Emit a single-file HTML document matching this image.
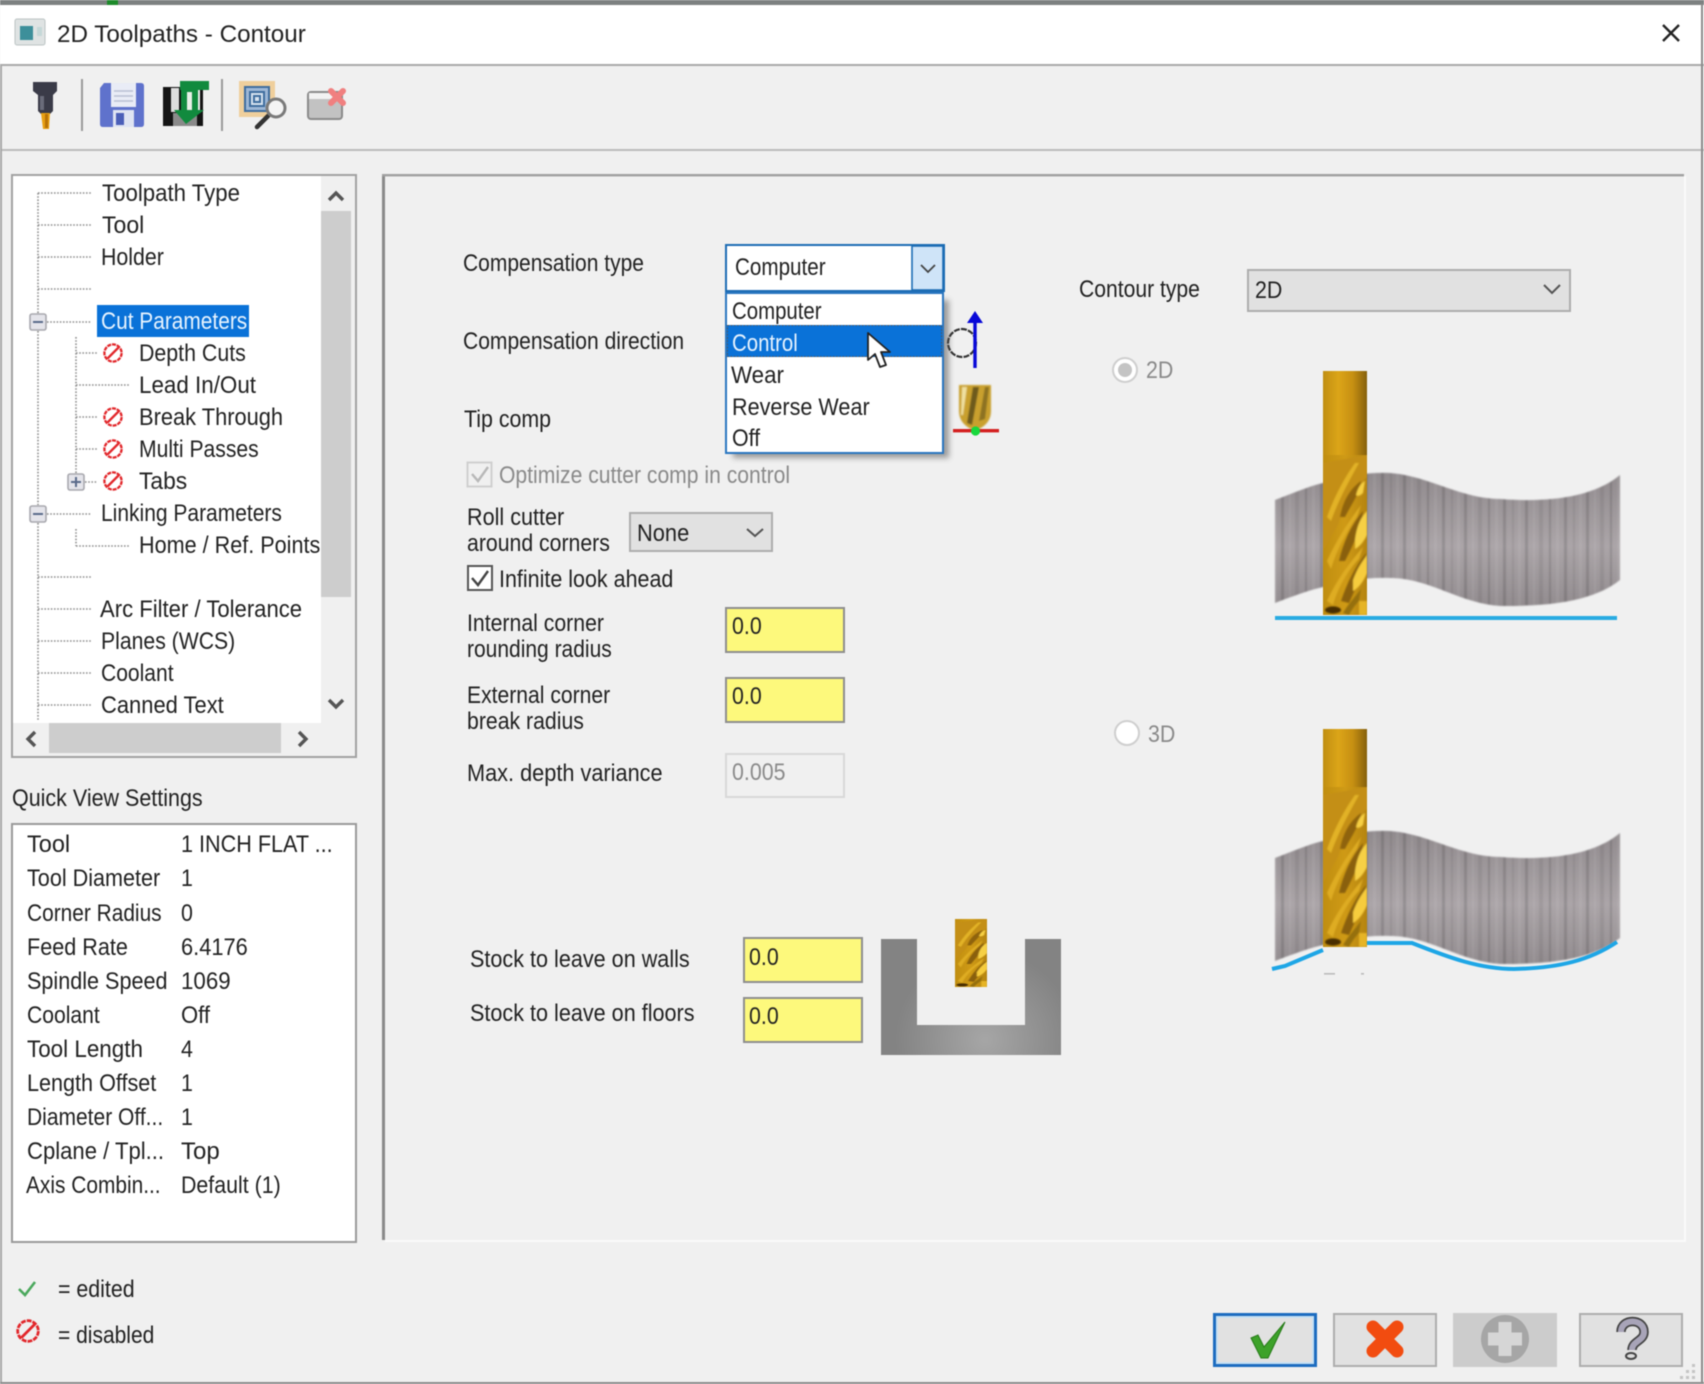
<!DOCTYPE html>
<html><head><meta charset="utf-8"><title>2D Toolpaths - Contour</title>
<style>
html,body{margin:0;padding:0;background:#f0f0f0}
#r{position:relative;width:1704px;height:1384px;overflow:hidden;background:#f0f0f0;filter:blur(.45px)}
svg{position:absolute;left:0;top:0}
.t{position:absolute;height:28px;line-height:28px;margin-top:-13px;font-family:"Liberation Sans",sans-serif;font-size:24px;color:#222;white-space:nowrap;transform:scaleX(.89);transform-origin:0 50%}
.g{color:#8a8a8a}.w{color:#e8f4ff}
</style></head><body><div id="r">
<svg width="1704" height="1384" viewBox="0 0 1704 1384">
<defs>
<linearGradient id="gs" x1="0" x2="1" y1="0" y2="0"><stop offset="0" stop-color="#c08e12"/><stop offset=".35" stop-color="#dca518"/><stop offset=".68" stop-color="#c68f12"/><stop offset="1" stop-color="#85600c"/></linearGradient>
<linearGradient id="gf" x1="0" x2="1" y1="0" y2="0"><stop offset="0" stop-color="#c08e10"/><stop offset=".5" stop-color="#cf9a16"/><stop offset="1" stop-color="#b58410"/></linearGradient>
<linearGradient id="gv" x1="0" x2="0" y1="0" y2="1"><stop offset="0" stop-color="#908a8d"/><stop offset=".55" stop-color="#aba5a8"/><stop offset="1" stop-color="#928c8f"/></linearGradient>
<radialGradient id="gu" gradientUnits="userSpaceOnUse" cx="985" cy="1040" r="90"><stop offset="0" stop-color="#a6a6a6"/><stop offset="1" stop-color="#838383"/></radialGradient>
<pattern id="st" width="61" height="10" patternUnits="userSpaceOnUse"><rect x="0" width="3" height="10" fill="#0002"/><rect x="8" width="2" height="10" fill="#fff1"/><rect x="14" width="4" height="10" fill="#0001"/><rect x="24" width="2" height="10" fill="#0002"/><rect x="31" width="3" height="10" fill="#fff1"/><rect x="39" width="3" height="10" fill="#0002"/><rect x="48" width="2" height="10" fill="#0001"/><rect x="54" width="3" height="10" fill="#fff1"/></pattern>
<filter id="bl"><feGaussianBlur stdDeviation="3"/></filter>
<filter id="sf" x="-5%" y="-5%" width="110%" height="110%"><feGaussianBlur stdDeviation=".8"/></filter>
<clipPath id="cf"><rect width="44" height="160"/></clipPath>
<g id="fl" clip-path="url(#cf)"><g>
<rect width="44" height="160" fill="url(#gf)"/>
<g filter="url(#sf)">
<path d="M0 8L44 0V22C30 34 22 48 15 70L0 96Z" fill="#c48f12"/>
<path d="M4 62C12 40 22 22 32 8L36 8C26 26 16 44 8 66Z" fill="#e2b228"/>
<path d="M4 106C14 84 26 66 38 50L34 62C24 76 14 94 8 114Z" fill="#deac24"/>
<path d="M4 146C14 124 28 106 40 92L36 104C26 114 16 130 10 150Z" fill="#deac24"/>
<path d="M17 62C20 45 28 33 38 26C37 38 28 50 22 62Z" fill="#8f6408"/>
<path d="M16 106C20 88 28 70 40 56C39 72 30 90 22 106Z" fill="#8a6008"/>
<path d="M18 146C24 128 32 112 43 98C42 112 34 130 26 148Z" fill="#8a6008"/>
<path d="M33 40C35 32 38 28 42 26L40 38C38 40 35 42 33 40Z" fill="#f6cf42"/>
<path d="M32 84C34 70 38 62 44 56V80C40 88 36 92 32 94Z" fill="#f6d044"/>
<path d="M30 125C34 114 38 108 44 100V118C40 128 34 134 30 136Z" fill="#f6cc3c"/>
<ellipse cx="10" cy="155" rx="8" ry="3.6" fill="#4a2e04"/>
<path d="M20 158C26 148 32 142 38 134L36 146C32 150 28 156 26 160Z" fill="#96700e"/>
<rect x="36" y="146" width="8" height="14" fill="#e6b426"/>
</g></g></g>
<path id="sp" d="M1275 500C1296 492 1310 486 1323 483C1345 475 1370 472 1390 473C1430 476 1460 499 1501 499C1540 502 1590 500 1620 475V580C1590 604 1540 606 1501 606C1460 604 1430 578 1390 578C1370 577 1345 580 1323 587C1310 590 1296 595 1275 603Z"/>
<g id="dis" fill="none" stroke="#e2272b" stroke-width="2.3"><circle r="8.6" stroke-dasharray="4 .9"/><path d="M-5.5 5.5L5.5-5.5"/></g>
</defs>
<rect x="0" y="0" width="1704" height="5" fill="#7d8181"/><rect x="107" y="0" width="11" height="5" fill="#1d8a2a"/>
<rect x="0" y="5" width="1704" height="59" fill="#fff"/>
<rect x="0" y="64" width="1704" height="2" fill="#a9a9a9"/>
<rect x="0" y="149" width="1704" height="2" fill="#bbb"/>
<rect x="0" y="66" width="2" height="1318" fill="#a8a8a8"/>
<rect x="1701" y="4" width="2" height="1380" fill="#8c8c8c"/>
<rect x="0" y="1382" width="1704" height="2" fill="#8c8c8c"/>
<!-- title icon -->
<rect x="15" y="19" width="30" height="26" rx="2" fill="#dfe3e3" stroke="#bcc4c4"/><rect x="20" y="26" width="13" height="14" fill="#3d8f9a"/><rect x="37" y="27" width="5" height="9" fill="#c5d8d8"/>
<path d="M1663 25L1679 41M1679 25L1663 41" stroke="#222" stroke-width="2.4" fill="none"/>
<!-- toolbar -->
<path d="M33 82H57V91L53 95V111L50 114H41L38 111V95L33 91Z" fill="#3a3b48"/><rect x="40" y="96" width="4" height="14" fill="#6a6c7a"/><path d="M41 113H50L49 129H43Z" fill="#e8a012"/><rect x="45" y="114" width="3" height="14" fill="#b87206"/>
<rect x="81" y="79" width="2" height="52" fill="#9a9a9a"/><rect x="221" y="79" width="2" height="52" fill="#9a9a9a"/>
<path d="M104 83H141Q144 83 144 86V124Q144 127 141 127H103Q100 127 100 124V88Z" fill="#5f72cc"/><rect x="111" y="83" width="25" height="24" fill="#e9ecf6"/><path d="M114 91H133M114 96H133M114 101H133" stroke="#b9bfd2" stroke-width="1.5"/><rect x="113" y="110" width="21" height="17" fill="#dfe4f2"/><rect x="116" y="113" width="8" height="12" fill="#4b5fb8"/>
<rect x="163" y="87" width="40" height="39" fill="#141414"/><rect x="171" y="88" width="8" height="24" fill="#ddd"/><rect x="173" y="113" width="24" height="13" fill="#8a8a8a"/><rect x="194" y="90" width="6" height="22" fill="#eee"/>
<path d="M180 81H209V90H198V110H204L186 124L174 110H181V90H180Z" fill="#118a3e"/><rect x="187" y="92" width="5" height="18" fill="#e8f0e8"/>
<rect x="239" y="81" width="36" height="36" fill="#efcf9c"/><rect x="245" y="87" width="24" height="24" fill="#9db7d6" stroke="#3f6d9e" stroke-width="2"/><rect x="250" y="92" width="14" height="14" fill="#d6e2ef" stroke="#3f6d9e" stroke-width="2"/><rect x="254" y="96" width="6" height="6" fill="none" stroke="#3f6d9e" stroke-width="2"/>
<path d="M268 116L257 127" stroke="#333" stroke-width="4.5" stroke-linecap="round"/><circle cx="276" cy="108" r="9" fill="#f4f4f4" stroke="#7a7a7a" stroke-width="3"/>
<rect x="308" y="92" width="34" height="27" rx="3" fill="#c2c2c2" stroke="#8a8a8a" stroke-width="2"/><rect x="309" y="93" width="32" height="6" fill="#f2f2f2"/><path d="M331 91L343 103M343 91L331 103" stroke="#f08080" stroke-width="6" stroke-linecap="round"/>
<!-- tree box -->
<rect x="12" y="175" width="344" height="582" fill="#f0f0f0" stroke="#a2a2a2" stroke-width="2"/>
<rect x="13" y="176" width="308" height="547" fill="#fff"/>
<rect x="321" y="211" width="30" height="386" fill="#cdcdcd"/>
<rect x="49" y="723" width="232" height="30" fill="#cdcdcd"/>
<g fill="none" stroke="#555" stroke-width="3.4"><path d="M329 200L336 193L343 200"/><path d="M329 700L336 707L343 700"/><path d="M35 732L28 739L35 746"/><path d="M299 732L306 739L299 746"/></g>
<g fill="none" stroke="#8f8f8f" stroke-width="1.6" stroke-dasharray="1.6 1.6">
<path d="M38 193V313M38 331V505M38 523V720"/><path d="M38 193H91M38 225H91M38 257H91M38 289H91M47 322H91M47 514H91M38 609H91M38 641H91M38 673H91M38 705H91M38 577H91"/>
<path d="M76 337V473M76 529V546"/><path d="M76 353H97M76 385H129M76 417H97M76 449H97M85 482H97M76 546H129"/>
</g>
<g fill="#e4e4ea" stroke="#a8a8ae" stroke-width="1.6"><rect x="30" y="314" width="16" height="16" rx="2"/><rect x="30" y="506" width="16" height="16" rx="2"/><rect x="68" y="474" width="16" height="16" rx="2"/></g>
<path d="M33 322H43M33 514H43M71 482H81M76 477V487" stroke="#5a6a8a" stroke-width="2"/>
<rect x="97" y="305" width="152" height="32" fill="#0a72d8"/>
<use href="#dis" x="113" y="353"/><use href="#dis" x="113" y="417"/><use href="#dis" x="113" y="449"/><use href="#dis" x="113" y="481"/>
<!-- quick view -->
<rect x="12" y="824" width="344" height="418" fill="#fff" stroke="#9a9a9a" stroke-width="2"/>
<path d="M19 1289L25 1295L35 1282" fill="none" stroke="#4aa85c" stroke-width="2.6"/>
<use href="#dis" transform="translate(28 1331) scale(1.2)"/>
<!-- group -->
<rect x="382" y="174" width="3" height="1066" fill="#8a8a8a"/><rect x="382" y="174" width="1302" height="2.4" fill="#a0a0a0"/>
<rect x="1684" y="176" width="2" height="1065" fill="#fafafa"/><rect x="385" y="1240" width="1301" height="2" fill="#fafafa"/>
<!-- direction/tip icons -->
<circle cx="962" cy="343" r="14" fill="none" stroke="#333" stroke-width="2.2" stroke-dasharray="6 1.2"/>
<path d="M975 368V318" stroke="#0808d8" stroke-width="3.4"/><path d="M967 323L975 311L983 323Z" fill="#0808d8"/>
<g transform="translate(959 385)" filter="url(#sf)"><path d="M0 0H32V26Q32 38 20 44H12Q0 38 0 26Z" fill="#c9a02e"/><path d="M8 38L14 2H20L13 40Z" fill="#6d5a1c"/><path d="M20 36L26 2H30L26 34Z" fill="#8d7220"/><path d="M3 2H8L4 30H2Z" fill="#efe0a0"/></g>
<rect x="953" y="429" width="46" height="3.4" fill="#d42020"/><circle cx="975.5" cy="431" r="4.6" fill="#18d83c"/>
<!-- combo & dropdown -->
<rect x="733" y="300" width="216" height="158" fill="#555" opacity=".55" filter="url(#bl)"/>
<rect x="726" y="245" width="218" height="46" fill="#fff" stroke="#1c6cb4" stroke-width="2"/>
<rect x="912" y="246" width="31" height="44" fill="#cfe4f8" stroke="#1c6cb4" stroke-width="1.6"/>
<path d="M921 265L928 272L935 265" fill="none" stroke="#444" stroke-width="1.8"/>
<rect x="726" y="293" width="217" height="160" fill="#fff" stroke="#2a76c0" stroke-width="2"/>
<rect x="727" y="325" width="215" height="32" fill="#0a72d8"/>
<rect x="727.5" y="325.5" width="214" height="31" fill="none" stroke="#555" stroke-dasharray="1.6 1.6"/>
<path d="M868 333V360L875 354L880 367L886 365L881 352L890 352Z" fill="#fff" stroke="#222" stroke-width="1.8" stroke-linejoin="round"/>
<!-- controls -->
<rect x="467.5" y="462.5" width="24" height="24" fill="#f0f0f0" stroke="#cfcfcf" stroke-width="2"/><path d="M472 474L478 481L488 467" fill="none" stroke="#b8b8b8" stroke-width="2.4"/>
<rect x="468" y="566" width="24" height="24" fill="#fff" stroke="#555" stroke-width="2"/><path d="M472 578L478 585L488 571" fill="none" stroke="#444" stroke-width="2.4"/>
<rect x="630" y="513" width="142" height="38" fill="#e1e1e1" stroke="#adadad" stroke-width="2"/><path d="M747 529L755 536L763 529" fill="none" stroke="#555" stroke-width="2"/>
<rect x="1248" y="270" width="322" height="41" fill="#e1e1e1" stroke="#adadad" stroke-width="2"/><path d="M1544 285L1552 293L1560 285" fill="none" stroke="#555" stroke-width="2"/>
<g fill="#fdf97c" stroke="#8e8e8e" stroke-width="2"><rect x="726" y="608" width="118" height="44"/><rect x="726" y="678" width="118" height="44"/><rect x="744" y="938" width="118" height="44"/><rect x="744" y="998" width="118" height="44"/></g>
<rect x="726" y="754" width="118" height="43" fill="#f0f0f0" stroke="#d8d8d8" stroke-width="2"/>
<!-- radios -->
<circle cx="1125" cy="370" r="12" fill="#fff" stroke="#cfcfcf" stroke-width="2"/><circle cx="1125" cy="370" r="7" fill="#c4c4c4"/>
<circle cx="1127" cy="733" r="12" fill="#fff" stroke="#cfcfcf" stroke-width="2"/>
<!-- picture 1 -->
<g filter="url(#sf)"><use href="#sp" fill="url(#gv)"/><use href="#sp" fill="url(#st)"/></g>
<rect x="1275" y="616" width="342" height="4" fill="#29abe2"/>
<rect x="1323" y="371" width="44" height="84" fill="url(#gs)"/>
<use href="#fl" x="1323" y="455"/>
<!-- picture 2 -->
<g transform="translate(0 358)" filter="url(#sf)"><use href="#sp" fill="url(#gv)"/><use href="#sp" fill="url(#st)"/></g>
<path d="M1272 969L1285 966L1323 950M1367 943H1412C1450 958 1480 969 1514 969C1560 968 1590 960 1617 942" fill="none" stroke="#1ea6e6" stroke-width="4"/>
<rect x="1323" y="729" width="44" height="58" fill="url(#gs)"/>
<use href="#fl" x="1323" y="787"/>
<rect x="1324" y="973" width="11" height="1.6" fill="#bbb"/><rect x="1361" y="973" width="3" height="1.6" fill="#bbb"/>
<!-- U shape -->
<path d="M881 939H917V1025H1025V939H1061V1055H881Z" fill="url(#gu)"/>
<use href="#fl" transform="translate(955 919) scale(.727 .425)"/>
<!-- buttons -->
<rect x="1214.5" y="1314.5" width="101" height="51" fill="#e1e1e1" stroke="#1c6cc0" stroke-width="3"/>
<rect x="1217" y="1317" width="96" height="46" fill="none" stroke="#bfe0f8" stroke-width="1.5"/>
<path d="M1251 1338L1258 1335L1264 1347L1285 1322L1268 1358H1261Z" fill="#3da22a" stroke="#267a18"/>
<rect x="1334" y="1314" width="102" height="52" fill="#e1e1e1" stroke="#adadad" stroke-width="2"/>
<path d="M1373 1327L1397 1351M1397 1327L1373 1351" stroke="#f24c10" stroke-width="13" stroke-linecap="round"/>
<rect x="1453" y="1313" width="104" height="54" fill="#cccccc"/>
<circle cx="1505" cy="1339" r="24" fill="#a6a6a6"/><path d="M1505 1322V1356M1488 1339H1522" stroke="#d6d6d6" stroke-width="13"/>
<rect x="1580" y="1314" width="102" height="52" fill="#e1e1e1" stroke="#adadad" stroke-width="2"/>
<path d="M1621 1332C1621 1318 1644 1318 1644 1332C1644 1341 1632 1341 1632 1350" fill="none" stroke="#444" stroke-width="9.5"/>
<path d="M1621 1332C1621 1318 1644 1318 1644 1332C1644 1341 1632 1341 1632 1350" fill="none" stroke="#a8a4b8" stroke-width="6"/>
<ellipse cx="1631" cy="1356" rx="5" ry="3" fill="#ddd" stroke="#444" stroke-width="2"/>
<g fill="#c4c4c4"><rect x="1692" y="1364" width="3" height="3"/><rect x="1686" y="1370" width="3" height="3"/><rect x="1692" y="1370" width="3" height="3"/><rect x="1680" y="1376" width="3" height="3"/><rect x="1686" y="1376" width="3" height="3"/><rect x="1692" y="1376" width="3" height="3"/></g>
</svg>

<div class="t" style="left:57px;top:34px;transform:scaleX(1.01)">2D Toolpaths - Contour</div>

<div class="t" style="left:101.5px;top:193px;transform:scaleX(.926)">Toolpath Type</div>
<div class="t" style="left:101.5px;top:225px;transform:scaleX(.96)">Tool</div>
<div class="t" style="left:101px;top:257px">Holder</div>
<div class="t w" style="left:101px;top:321px;transform:scaleX(.87)">Cut Parameters</div>
<div class="t" style="left:139px;top:353px">Depth Cuts</div>
<div class="t" style="left:139px;top:385px;transform:scaleX(.933)">Lead In/Out</div>
<div class="t" style="left:139px;top:417px;transform:scaleX(.91)">Break Through</div>
<div class="t" style="left:139px;top:449px;transform:scaleX(.88)">Multi Passes</div>
<div class="t" style="left:139px;top:481px;transform:scaleX(.95)">Tabs</div>
<div class="t" style="left:101px;top:513px;transform:scaleX(.875)">Linking Parameters</div>
<div class="t" style="left:139px;top:545px;width:204px;overflow:hidden;transform:scaleX(.9)">Home / Ref. Points</div>
<div class="t" style="left:100px;top:609px;transform:scaleX(.92)">Arc Filter / Tolerance</div>
<div class="t" style="left:101px;top:641px;transform:scaleX(.883)">Planes (WCS)</div>
<div class="t" style="left:101px;top:673px;transform:scaleX(.877)">Coolant</div>
<div class="t" style="left:101px;top:705px;transform:scaleX(.914)">Canned Text</div>

<div class="t" style="left:12px;top:798px;transform:scaleX(.895)">Quick View Settings</div>
<div class="t" style="left:27px;top:844px;transform:scaleX(.98)">Tool</div><div class="t" style="left:181px;top:844px;transform:scaleX(.9)">1 INCH FLAT ...</div>
<div class="t" style="left:27px;top:878px;transform:scaleX(.9)">Tool Diameter</div><div class="t" style="left:181px;top:878px">1</div>
<div class="t" style="left:27px;top:913px;transform:scaleX(.87)">Corner Radius</div><div class="t" style="left:181px;top:913px">0</div>
<div class="t" style="left:27px;top:947px;transform:scaleX(.9)">Feed Rate</div><div class="t" style="left:181px;top:947px;transform:scaleX(.91)">6.4176</div>
<div class="t" style="left:27px;top:981px;transform:scaleX(.9)">Spindle Speed</div><div class="t" style="left:181px;top:981px;transform:scaleX(.93)">1069</div>
<div class="t" style="left:27px;top:1015px;transform:scaleX(.88)">Coolant</div><div class="t" style="left:181px;top:1015px;transform:scaleX(.92)">Off</div>
<div class="t" style="left:27px;top:1049px;transform:scaleX(.934)">Tool Length</div><div class="t" style="left:181px;top:1049px">4</div>
<div class="t" style="left:27px;top:1083px;transform:scaleX(.9)">Length Offset</div><div class="t" style="left:181px;top:1083px">1</div>
<div class="t" style="left:27px;top:1117px;transform:scaleX(.875)">Diameter Off...</div><div class="t" style="left:181px;top:1117px">1</div>
<div class="t" style="left:27px;top:1151px;transform:scaleX(.92)">Cplane / Tpl...</div><div class="t" style="left:181px;top:1151px;transform:scaleX(1)">Top</div>
<div class="t" style="left:26px;top:1185px;transform:scaleX(.87)">Axis Combin...</div><div class="t" style="left:181px;top:1185px">Default (1)</div>

<div class="t" style="left:58px;top:1289px">= edited</div>
<div class="t" style="left:58px;top:1335px;transform:scaleX(.875)">= disabled</div>

<div class="t" style="left:463px;top:263px;transform:scaleX(.875)">Compensation type</div>
<div class="t" style="left:463px;top:341px;transform:scaleX(.877)">Compensation direction</div>
<div class="t" style="left:464px;top:419px">Tip comp</div>
<div class="t" style="left:735px;top:267px;transform:scaleX(.86)">Computer</div>
<div class="t" style="left:731.5px;top:311px;transform:scaleX(.85)">Computer</div>
<div class="t w" style="left:731.5px;top:343px;transform:scaleX(.85)">Control</div>
<div class="t" style="left:731px;top:375px;transform:scaleX(.93)">Wear</div>
<div class="t" style="left:731.5px;top:407px;transform:scaleX(.9)">Reverse Wear</div>
<div class="t" style="left:731.5px;top:438px">Off</div>
<div class="t g" style="left:499px;top:475px;transform:scaleX(.88)">Optimize cutter comp in control</div>
<div class="t" style="left:467px;top:517px;transform:scaleX(.9)">Roll cutter</div>
<div class="t" style="left:467px;top:543px;transform:scaleX(.885)">around corners</div>
<div class="t" style="left:637px;top:533px;transform:scaleX(.91)">None</div>
<div class="t" style="left:499px;top:579px;transform:scaleX(.895)">Infinite look ahead</div>
<div class="t" style="left:467px;top:623px;transform:scaleX(.885)">Internal corner</div>
<div class="t" style="left:467px;top:649px;transform:scaleX(.875)">rounding radius</div>
<div class="t" style="left:732px;top:626px">0.0</div>
<div class="t" style="left:467px;top:695px;transform:scaleX(.88)">External corner</div>
<div class="t" style="left:467px;top:721px;transform:scaleX(.885)">break radius</div>
<div class="t" style="left:732px;top:696px">0.0</div>
<div class="t" style="left:467px;top:773px;transform:scaleX(.905)">Max. depth variance</div>
<div class="t g" style="left:732px;top:772px">0.005</div>
<div class="t" style="left:470px;top:959px;transform:scaleX(.9)">Stock to leave on walls</div>
<div class="t" style="left:470px;top:1013px;transform:scaleX(.9)">Stock to leave on floors</div>
<div class="t" style="left:749px;top:957px">0.0</div>
<div class="t" style="left:749px;top:1016px">0.0</div>
<div class="t" style="left:1079px;top:289px;transform:scaleX(.88)">Contour type</div>
<div class="t" style="left:1255px;top:290px">2D</div>
<div class="t g" style="left:1146px;top:370px">2D</div>
<div class="t g" style="left:1148px;top:734px">3D</div>
</div></body></html>
